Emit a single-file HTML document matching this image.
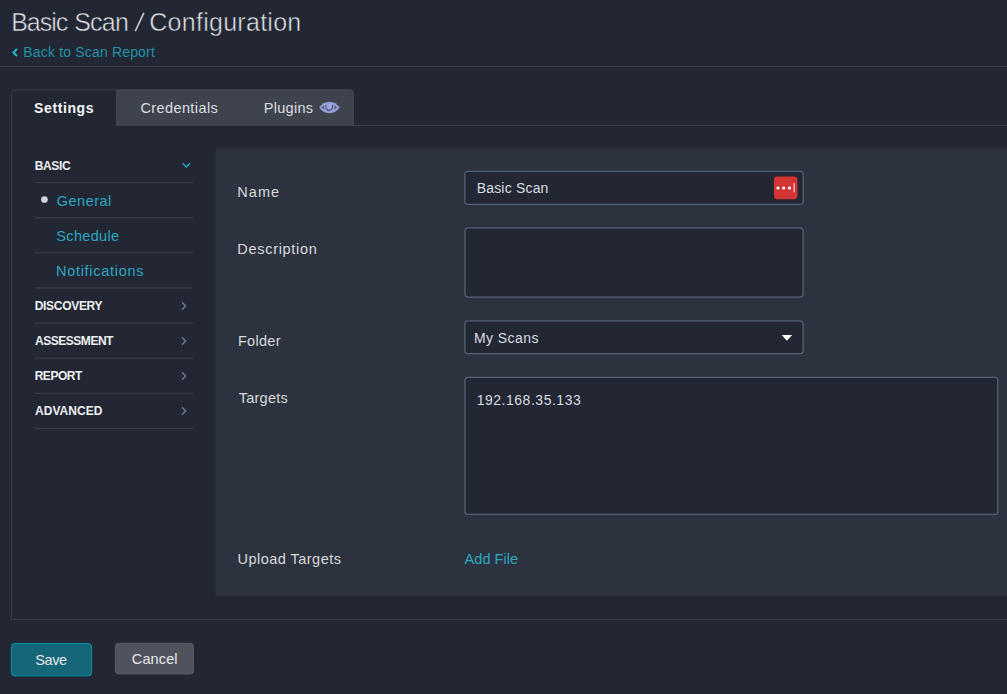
<!DOCTYPE html>
<html>
<head>
<meta charset="utf-8">
<title>Basic Scan / Configuration</title>
<style>
html,body{margin:0;padding:0;}
body{width:1007px;height:694px;overflow:hidden;background:#222733;position:relative;
  font-family:"Liberation Sans",sans-serif;color:#e4e6ea;}
.t{position:absolute;white-space:nowrap;line-height:1;}
.abs{position:absolute;}
.link{color:#2aa8c2;}
.lbl{font-size:14.5px;color:#d8dade;}
.hdr{font-size:12px;font-weight:bold;color:#eff0f2;}
</style>
</head>
<body>

<svg class="abs" id="deco" style="left:0;top:0;" width="1007" height="694" viewBox="0 0 1007 694">
<!-- header separator -->
<rect x="0" y="65.84" width="1007" height="1" fill="#3c414c"/>
<!-- inactive tabs -->
<path d="M115.9 125.9 L115.9 89.45 L350 89.45 Q353.8 89.45 353.8 93.2 L353.8 125.9 Z" fill="#3f434d"/>
<path d="M115.9 89.95 L350 89.95 Q353.3 89.95 353.3 93.3 L353.3 125" fill="none" stroke="#454954" stroke-width="1"/>
<!-- tab bar bottom line -->
<rect x="116" y="124.89" width="891" height="1" fill="#3c414c"/>
<!-- active tab + container border -->
<path d="M11.6 619.95 L11.6 93.6 Q11.6 90.06 15.2 90.06 L116 90.06" fill="none" stroke="#3c414c" stroke-width="1"/>
<rect x="11.1" y="618.95" width="996" height="1" fill="#3c414c"/>
<!-- nav separators -->
<rect x="35" y="182.17" width="158" height="1" fill="#3c414c"/><rect x="35" y="217.27" width="158" height="1" fill="#3c414c"/><rect x="35" y="252.37" width="158" height="1" fill="#3c414c"/><rect x="35" y="287.47" width="158" height="1" fill="#3c414c"/><rect x="35" y="322.57" width="158" height="1" fill="#3c414c"/><rect x="35" y="357.67" width="158" height="1" fill="#3c414c"/><rect x="35" y="392.77" width="158" height="1" fill="#3c414c"/><rect x="35" y="427.87" width="158" height="1" fill="#3c414c"/>
<!-- form panel -->
<rect x="215.56" y="148.44" width="800" height="447.83" fill="#2d333e"/>
<!-- inputs -->
<rect x="464.95" y="171.4" width="338.20" height="32.95" rx="3.2" fill="#222733" stroke="#54617a" stroke-width="1.3"/>
<rect x="465.0" y="227.97" width="338.10" height="69.06" rx="3.2" fill="#222733" stroke="#54617a" stroke-width="1.3"/>
<rect x="464.95" y="320.79" width="338.15" height="32.79" rx="3.2" fill="#222733" stroke="#54617a" stroke-width="1.3"/>
<rect x="465.0" y="377.44" width="532.78" height="136.95" rx="3.2" fill="#222733" stroke="#54617a" stroke-width="1.3"/>
<!-- buttons -->
<rect x="11.44" y="643.44" width="80.06" height="32.41" rx="3.2" fill="#156678" stroke="#0796a6" stroke-width="1"/>
<rect x="115.3" y="643.3" width="78.2" height="30.7" rx="3.2" fill="#50535d" stroke="#565964" stroke-width="1"/>
</svg>

<!-- header -->
<div class="t" id="tt1" style="left:11.14px;top:9.99px;font-size:25px;color:#dcdde1;-webkit-text-stroke:0.45px #222733;letter-spacing:-0.986px;">Basic</div>
<div class="t" id="tt2" style="left:74.14px;top:9.99px;font-size:25px;color:#dcdde1;-webkit-text-stroke:0.45px #222733;letter-spacing:-0.761px;">Scan</div>
<svg class="abs" id="tt3" style="left:133px;top:11px;" width="14" height="22" viewBox="0 0 14 22"><path d="M2.3 20.1 L10.9 1.9" fill="none" stroke="#cfd0d4" stroke-width="1.55"/></svg>
<div class="t" id="tt4" style="left:149.23px;top:9.99px;font-size:25px;color:#dcdde1;-webkit-text-stroke:0.45px #222733;letter-spacing:0.279px;">Configuration</div>
<svg class="abs" style="left:12px;top:48px;" width="7" height="9" viewBox="0 0 7 9"><path d="M4.9 0.9 L1.5 4.45 L4.9 8" fill="none" stroke="#27b2d3" stroke-width="2"/></svg>
<div class="t" id="back" style="color:#2191a8;left:23.28px;top:45.30px;font-size:14px;letter-spacing:0.174px;">Back to Scan Report</div>

<!-- tab container -->
<div class="t" id="tSet" style="left:34.07px;top:101.30px;font-size:14px;font-weight:bold;color:#f6f6f8;letter-spacing:0.601px;">Settings</div>
<div class="t" id="tCred" style="left:140.39px;top:100.88px;font-size:14.5px;color:#dcdde1;letter-spacing:0.407px;">Credentials</div>
<div class="t" id="tPlug" style="left:263.76px;top:100.88px;font-size:14.5px;color:#dcdde1;letter-spacing:0.290px;">Plugins</div>
<svg class="abs" id="eye" style="left:319px;top:101px;" width="21" height="13" viewBox="0 0 21 13">
  <path d="M0.2 6.5 C2.6 2.9 6.1 0.7 10.4 0.7 C14.7 0.7 18.2 2.9 20.7 6.5 C18.2 10.1 14.7 12.2 10.4 12.2 C6.1 12.2 2.6 10.1 0.2 6.5 Z" fill="#909fd6"/>
  <path d="M2.6 6.6 L4.9 4.6 L4.9 8.6 Z" fill="#454a5c" opacity="0.9"/>
  <path d="M17.9 6.6 L15.6 4.6 L15.6 8.6 Z" fill="#454a5c" opacity="0.9"/>
  <path d="M6.9 3.9 L6.9 6 A3.35 3.35 0 0 0 13.6 6 L13.6 3.9" fill="none" stroke="#484d68" stroke-width="1.1" opacity="0.9"/>
  <circle cx="10.3" cy="5.4" r="2.1" fill="#a5b2e0" opacity="0.7"/>
</svg>

<!-- left nav -->
<div class="t hdr" id="nBasic" style="left:34.66px;top:159.99px;letter-spacing:-0.343px;">BASIC</div>
<svg class="abs" style="left:182px;top:162px;" width="9" height="7" viewBox="0 0 9 7"><path d="M0.6 1.3 L4.25 5 L7.9 1.3" fill="none" stroke="#2aa8c2" stroke-width="1.45"/></svg>
<svg class="abs" style="left:40px;top:195px;" width="9" height="9" viewBox="0 0 9 9"><circle cx="4.4" cy="4.5" r="3.35" fill="#d2d3d6"/></svg>
<div class="t link" id="nGen" style="left:56.86px;top:193.88px;font-size:14.5px;letter-spacing:0.454px;">General</div>
<div class="t link" id="nSch" style="left:56.32px;top:228.88px;font-size:14.5px;letter-spacing:0.334px;">Schedule</div>
<div class="t link" id="nNot" style="left:55.98px;top:263.88px;font-size:14.5px;letter-spacing:0.716px;">Notifications</div>
<div class="t hdr" id="nDisc" style="left:34.66px;top:299.99px;letter-spacing:-0.292px;">DISCOVERY</div>
<svg class="abs chev" style="left:181px;top:301px;" width="7" height="10" viewBox="0 0 7 10"><path d="M0.9 1.2 L4.7 5 L0.9 8.8" fill="none" stroke="#6b7894" stroke-width="1.4"/></svg>
<div class="t hdr" id="nAss" style="left:34.93px;top:334.99px;letter-spacing:-0.461px;">ASSESSMENT</div>
<svg class="abs chev" style="left:181px;top:336px;" width="7" height="10" viewBox="0 0 7 10"><path d="M0.9 1.2 L4.7 5 L0.9 8.8" fill="none" stroke="#6b7894" stroke-width="1.4"/></svg>
<div class="t hdr" id="nRep" style="left:34.66px;top:369.99px;letter-spacing:-0.454px;">REPORT</div>
<svg class="abs chev" style="left:181px;top:371px;" width="7" height="10" viewBox="0 0 7 10"><path d="M0.9 1.2 L4.7 5 L0.9 8.8" fill="none" stroke="#6b7894" stroke-width="1.4"/></svg>
<div class="t hdr" id="nAdv" style="left:34.93px;top:404.99px;letter-spacing:0.064px;">ADVANCED</div>
<svg class="abs chev" style="left:181px;top:406px;" width="7" height="10" viewBox="0 0 7 10"><path d="M0.9 1.2 L4.7 5 L0.9 8.8" fill="none" stroke="#6b7894" stroke-width="1.4"/></svg>

<!-- form -->
<div class="t lbl" id="lName" style="left:237.35px;top:184.88px;letter-spacing:1.039px;">Name</div>
<div class="t" id="vName" style="left:476.63px;top:181.30px;font-size:14px;color:#dadce0;letter-spacing:0.193px;">Basic Scan</div>
<!-- password-manager icon -->
<svg class="abs" id="lp" style="left:773px;top:175px;" width="26" height="26" viewBox="0 0 26 26">
  <rect x="0.9" y="1.4" width="23.5" height="22.9" rx="3.6" fill="#d23534"/>
  <circle cx="5.0" cy="13.0" r="1.6" fill="#fff"/><circle cx="10.7" cy="13.0" r="1.6" fill="#fff"/><circle cx="16.4" cy="13.0" r="1.6" fill="#fff"/>
  <rect x="20.6" y="8.1" width="1.1" height="9.2" fill="#f6dcdc"/>
</svg>

<div class="t lbl" id="lDesc" style="left:237.35px;top:241.88px;letter-spacing:0.690px;">Description</div>

<div class="t lbl" id="lFold" style="left:237.96px;top:333.88px;letter-spacing:0.294px;">Folder</div>
<div class="t" id="vFold" style="left:474.04px;top:331.30px;font-size:14px;color:#dadce0;letter-spacing:0.422px;">My Scans</div>
<svg class="abs" style="left:781px;top:334px;" width="12" height="8" viewBox="0 0 12 8"><path d="M0.7 0.9 L11.1 0.9 L5.9 6.7 Z" fill="#ffffff"/></svg>

<div class="t lbl" id="lTarg" style="left:238.70px;top:390.88px;letter-spacing:0.260px;">Targets</div>
<div class="t" id="vTarg" style="left:476.66px;top:393.30px;font-size:14px;color:#dadce0;letter-spacing:0.523px;">192.168.35.133</div>

<div class="t lbl" id="lUp" style="left:237.46px;top:551.88px;letter-spacing:0.478px;">Upload Targets</div>
<div class="t link" id="vAdd" style="left:464.60px;top:551.88px;font-size:14.5px;letter-spacing:0.047px;">Add File</div>

<!-- buttons -->
<div class="t" id="tSave" style="left:35.28px;top:652.88px;font-size:14.5px;color:#e6e8eb;letter-spacing:-0.398px;">Save</div>
<div class="t" id="tCan" style="left:131.86px;top:651.88px;font-size:14.5px;color:#e6e8eb;letter-spacing:0.104px;">Cancel</div>

</body>
</html>
